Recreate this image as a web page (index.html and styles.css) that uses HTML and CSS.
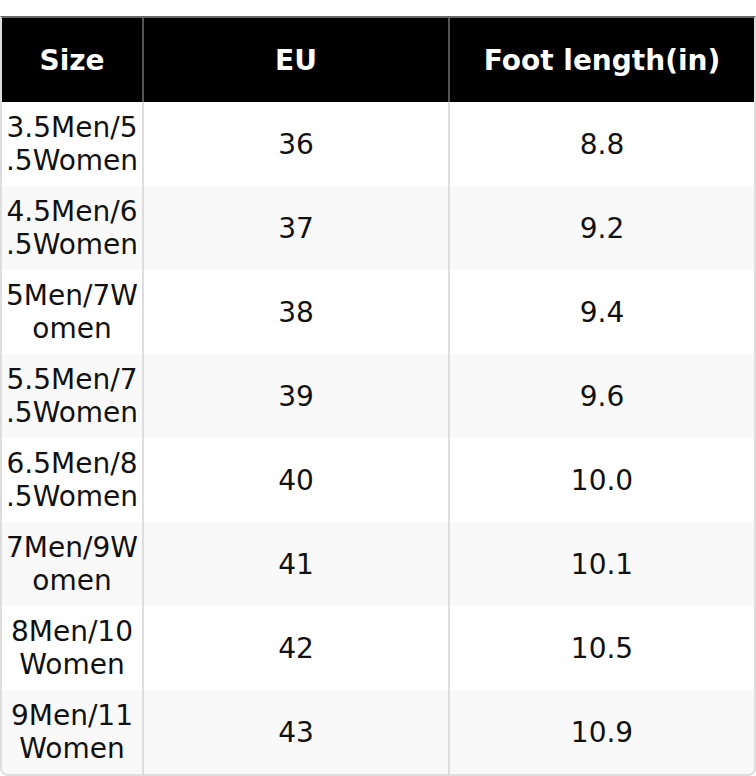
FILE: index.html
```html
<!DOCTYPE html>
<html lang="en">
<head>
<meta charset="utf-8">
<title>Size chart</title>
<link rel="stylesheet" href="styles.css">
</head>
<body>
<div class="chart">
  <table class="size-table">
    <colgroup>
      <col class="c-size">
      <col class="c-eu">
      <col class="c-foot">
    </colgroup>
    <thead>
      <tr><th>Size</th><th>EU</th><th>Foot length(in)</th></tr>
    </thead>
    <tbody>
      <tr><td>3.5Men/5.5Women</td><td>36</td><td>8.8</td></tr>
      <tr><td>4.5Men/6.5Women</td><td>37</td><td>9.2</td></tr>
      <tr><td>5Men/7Women</td><td>38</td><td>9.4</td></tr>
      <tr><td>5.5Men/7.5Women</td><td>39</td><td>9.6</td></tr>
      <tr><td>6.5Men/8.5Women</td><td>40</td><td>10.0</td></tr>
      <tr><td>7Men/9Women</td><td>41</td><td>10.1</td></tr>
      <tr><td>8Men/10Women</td><td>42</td><td>10.5</td></tr>
      <tr><td>9Men/11Women</td><td>43</td><td>10.9</td></tr>
    </tbody>
  </table>
</div>
</body>
</html>
```
FILE: styles.css
```css
html, body {
  margin: 0;
  padding: 0;
  background: #fff;
}
body {
  padding-top: 16px;
  font-family: "DejaVu Sans", "Liberation Sans", sans-serif;
  color: #111;
}
.chart {
  width: 756px;
  box-sizing: border-box;
  border: 2px solid #ddd;
  border-top-color: #666;
  border-radius: 0 0 8px 8px;
  overflow: hidden;
}
.size-table {
  width: 752px;
  table-layout: fixed;
  border-collapse: separate;
  border-spacing: 0;
  font-size: 28px;
  line-height: 33px;
}
.c-size { width: 140px; }
.c-eu { width: 306px; }
.c-foot { width: 306px; }
.size-table tr {
  height: 84px;
}
.size-table th,
.size-table td {
  padding: 0 3px;
  text-align: center;
  vertical-align: middle;
  word-break: normal;
  overflow-wrap: anywhere;
}
.size-table th {
  background: #000;
  color: #fff;
  font-weight: bold;
}
.size-table th + th {
  border-left: 2px solid #555;
}
.size-table td + td {
  border-left: 2px solid #ddd;
}
.size-table tbody tr:nth-child(odd) td {
  background: #fff;
}
.size-table tbody tr:nth-child(even) td {
  background: #f9f9f9;
}
```
